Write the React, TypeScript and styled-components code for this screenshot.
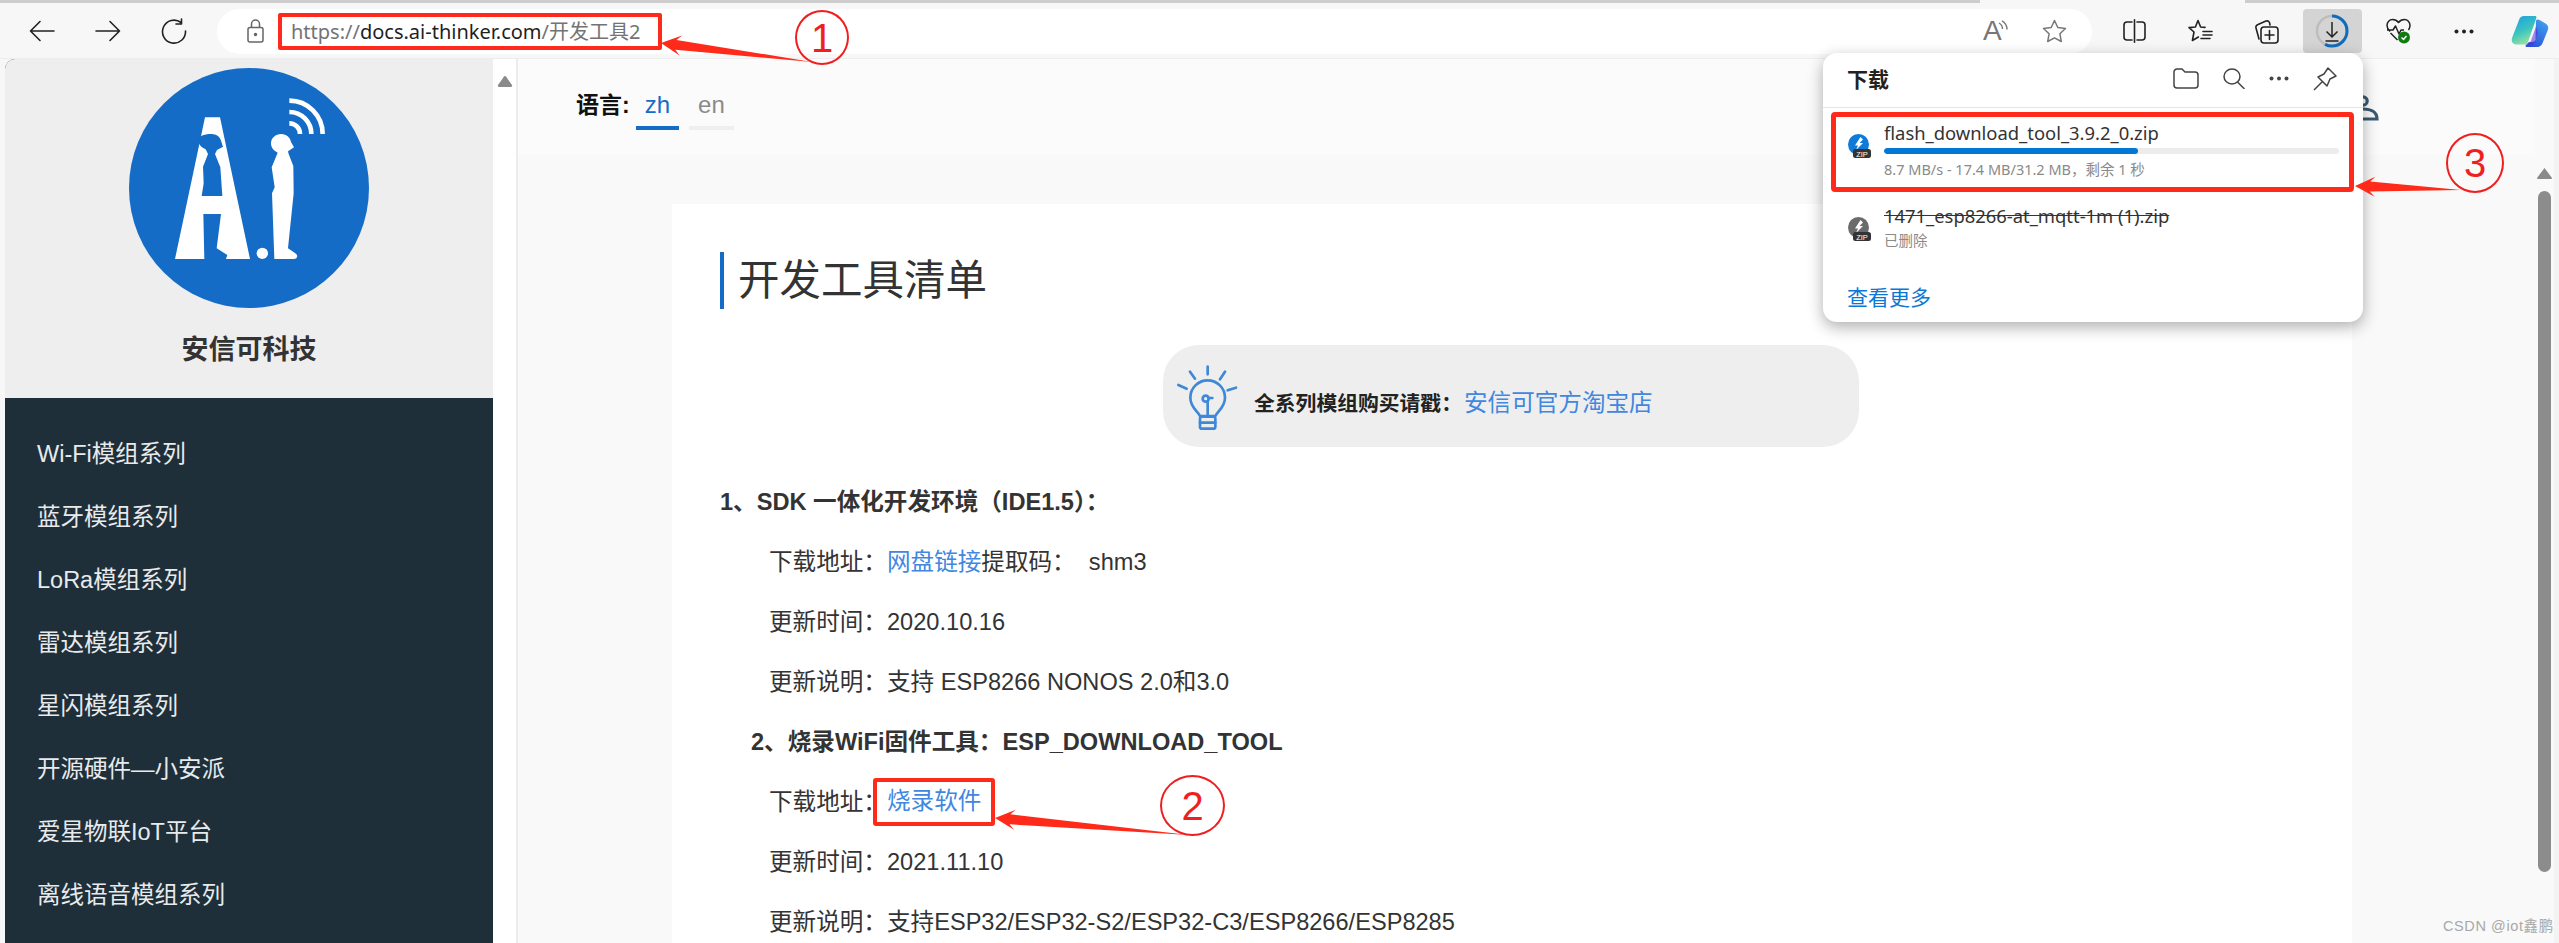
import React from 'react';
import styled, { createGlobalStyle } from 'styled-components';

const UI_FONT = '"Noto Sans", "Noto Sans CJK SC", sans-serif';
const PAGE_FONT = '"Liberation Sans", "Noto Sans CJK SC", sans-serif';
const RED = '#ff2a1a';
const BLUE = '#156cc7';
const LINK = '#4187e0';

const GlobalStyle = createGlobalStyle`
  html, body {
    margin: 0;
    padding: 0;
    background: #f7f7f7;
  }
  * {
    box-sizing: border-box;
  }
`;

const Page = styled.div`
  position: relative;
  width: 2559px;
  height: 943px;
  overflow: hidden;
  background: #f7f7f7;
`;

const TabStrip = styled.div`
  display: flex;
  height: 3px;
  background: #cdcdcd;
`;
const ActiveTabGap = styled.div`
  width: 265px;
  margin-left: 1980px;
  background: #f7f7f7;
`;

const Toolbar = styled.header`
  display: flex;
  align-items: center;
  height: 56px;
  padding: 1px 0 0 9px;
  border-bottom: 1px solid #ededed;
`;
const ToolSlot = styled.div`
  flex: none;
  width: 66px;
  display: flex;
  align-items: center;
  justify-content: center;
`;
const DownloadButton = styled.div`
  width: 59px;
  height: 44px;
  border-radius: 4px;
  background: #d4d4d4;
  display: flex;
  align-items: center;
  justify-content: center;
`;
const AddressBar = styled.div`
  flex: none;
  width: 1875px;
  height: 45px;
  margin: 0 9px 0 10px;
  padding: 0 25px 0 30px;
  border-radius: 23px;
  background: #fff;
  display: flex;
  align-items: center;
`;
const UrlBox = styled.div`
  height: 37px;
  width: 384px;
  margin-left: 14px;
  padding-left: 9px;
  border: 4px solid ${RED};
  border-radius: 2px;
  font: 20px/29px ${UI_FONT};
  color: #737373;
  white-space: nowrap;
`;
const UrlHost = styled.span`
  color: #1f1f1f;
`;
const AddressActions = styled.div`
  margin-left: auto;
  display: flex;
  align-items: center;
  gap: 33px;
`;

const Body = styled.div`
  display: flex;
  height: 884px;
  padding-left: 5px;
`;
const Sidebar = styled.aside`
  flex: none;
  width: 488px;
  border-radius: 10px 0 0 0;
  overflow: hidden;
  background: #1e2f3a;
`;
const SidebarHeader = styled.div`
  height: 339px;
  padding-top: 9px;
  background: #eee;
  display: flex;
  flex-direction: column;
  align-items: center;
`;
const SidebarTitle = styled.div`
  margin-top: 26px;
  font: bold 27px/32px ${PAGE_FONT};
  color: #333;
`;
const SideMenu = styled.ul`
  margin: 0;
  padding: 25px 0 0 32px;
  list-style: none;
`;
const SideMenuItem = styled.li`
  font: 23.5px/63px ${PAGE_FONT};
  color: #e8eaec;
  white-space: nowrap;
`;
const SideScroll = styled.div`
  flex: none;
  width: 23px;
  padding: 14px 0 0 4px;
  background: #fff;
`;

const Main = styled.main`
  flex: 1;
  min-width: 0;
  border-left: 2px solid #ececec;
  background: #f9f9f9;
`;
const LangBar = styled.div`
  height: 96px;
  padding: 25px 156px 0 58px;
  background: #fbfbfb;
  display: flex;
  align-items: flex-start;
`;
const LangLabel = styled.b`
  font: bold 23px/42px ${PAGE_FONT};
  color: #111;
  margin-right: 6px;
`;
const LangTab = styled.div<{ $active?: boolean }>`
  height: 46px;
  padding: 0 9px;
  margin-right: 10px;
  border-bottom: 4px solid ${p => (p.$active ? BLUE : '#efefef')};
  font: 24px/42px ${PAGE_FONT};
  color: ${p => (p.$active ? BLUE : '#8a8a8a')};
`;
const UserIcon = styled.svg`
  margin: 11px 0 0 auto;
  flex: none;
`;

const Card = styled.article`
  width: 1680px;
  height: 739px;
  margin: 49px 0 0 154px;
  padding: 48px 0 0 48px;
  background: #fff;
  overflow: hidden;
`;
const Heading = styled.h1`
  margin: 0;
  height: 57px;
  padding-left: 14px;
  border-left: 4px solid ${BLUE};
  font: 400 41.5px/57px ${PAGE_FONT};
  color: #333;
`;
const TipBox = styled.div`
  width: 696px;
  height: 102px;
  margin: 36px 0 25px 443px;
  padding-left: 7px;
  border-radius: 36px;
  background: #eee;
  display: flex;
  align-items: center;
`;
const TipText = styled.p`
  margin: 14px 0 0 4px;
  font: bold 20.8px/30px ${PAGE_FONT};
  color: #222;
`;
const TipLink = styled.a`
  margin-left: 2px;
  font: 400 23.6px/30px ${PAGE_FONT};
  color: ${LINK};
`;
const Row = styled.div<{ $indent: number; $bold?: boolean }>`
  height: 60px;
  padding-left: ${p => p.$indent}px;
  font: ${p => (p.$bold ? 'bold' : '400')} 23.6px/60px ${PAGE_FONT};
  color: #333;
  white-space: pre;
`;
const RowLink = styled.a`
  color: ${LINK};
`;
const BoxedLink = styled.a`
  display: inline-block;
  vertical-align: middle;
  height: 48px;
  margin: -4px 0 0 -14px;
  padding: 0 10px;
  border: 4px solid ${RED};
  border-radius: 3px;
  font-size: 23.6px;
  line-height: 38px;
  color: ${LINK};
`;

const RightScroll = styled.div`
  flex: none;
  width: 24px;
  padding: 109px 4px 0 3px;
  background: #f9f9f9;
  border-right: 5px solid #f3f3f3;
  display: flex;
  flex-direction: column;
  align-items: center;
`;
const ScrollThumb = styled.div`
  width: 13px;
  height: 681px;
  margin-top: 12px;
  border-radius: 7px;
  background: #8c8c8c;
`;

const Popup = styled.section`
  position: absolute;
  left: 1823px;
  top: 53px;
  width: 540px;
  height: 269px;
  border-radius: 14px;
  background: #fff;
  box-shadow: 0 5px 16px rgba(0, 0, 0, .32);
  font-family: ${UI_FONT};
`;
const PopupHeader = styled.div`
  height: 55px;
  padding: 0 26px 3px 24px;
  border-bottom: 1px solid #e6e6e6;
  display: flex;
  align-items: center;
`;
const PopupTitle = styled.h2`
  margin: 0 auto 0 0;
  font: bold 21px/30px ${UI_FONT};
  color: #222;
`;
const PopupActions = styled.div`
  display: flex;
  align-items: center;
  gap: 24px;
`;
const DownloadItem = styled.div<{ $active?: boolean }>`
  margin: ${p => (p.$active ? '4px 9px 0 8px' : '0 9px 0 8px')};
  height: ${p => (p.$active ? '80px' : '60px')};
  padding: ${p => (p.$active ? '5px 10px 0 12px' : '13px 15px 0 17px')};
  border: ${p => (p.$active ? `5px solid ${RED}` : 'none')};
  border-radius: 4px;
  display: flex;
  gap: 13px;
`;
const ItemIcon = styled.svg`
  flex: none;
  margin-top: 12px;
`;
const ItemBody = styled.div`
  flex: 1;
  min-width: 0;
`;
const FileName = styled.div<{ $deleted?: boolean }>`
  font-size: 18.4px;
  line-height: 22px;
  color: #333;
  white-space: nowrap;
  text-decoration: ${p => (p.$deleted ? 'line-through' : 'none')};
`;
const ProgressTrack = styled.div`
  height: 6px;
  margin-top: 4px;
  border-radius: 3px;
  background: #ececec;
  overflow: hidden;
`;
const ProgressFill = styled.div`
  height: 100%;
  border-radius: 3px;
  background: #0078d4;
`;
const ItemStatus = styled.div<{ $deleted?: boolean }>`
  margin-top: ${p => (p.$deleted ? '2px' : '4px')};
  font-size: 14.5px;
  line-height: 22px;
  color: #8a8a8a;
  white-space: nowrap;
`;
const SeeMore = styled.a`
  display: block;
  margin: 30px 0 0 24px;
  font-size: 21px;
  line-height: 30px;
  color: #0a78d4;
`;

const ArrowLayer = styled.svg`
  position: absolute;
  left: 0;
  top: 0;
  pointer-events: none;
`;
const Callout = styled.div<{ $x: number; $y: number; $w: number; $h: number }>`
  position: absolute;
  left: ${p => p.$x}px;
  top: ${p => p.$y}px;
  width: ${p => p.$w}px;
  height: ${p => p.$h}px;
  border: 2.5px solid #f01f1f;
  border-radius: 50%;
  display: flex;
  align-items: center;
  justify-content: center;
  font: 40px/1 ${PAGE_FONT};
  color: #f01f1f;
`;
const Watermark = styled.div`
  position: absolute;
  left: 2443px;
  top: 917px;
  font: 14.5px/18px ${PAGE_FONT};
  letter-spacing: .6px;
  color: #a8a8a8;
  white-space: nowrap;
`;

const Stroke = { fill: 'none', stroke: '#222', strokeWidth: 1.6, strokeLinecap: 'round', strokeLinejoin: 'round' } as const;

const BackIcon = () => (
  <svg width="26" height="22" viewBox="0 0 26 22" {...Stroke}><path d="M25 11H1.5M11 1.5 1.5 11 11 20.5" /></svg>
);
const ForwardIcon = () => (
  <svg width="26" height="22" viewBox="0 0 26 22" {...Stroke}><path d="M1 11h23.5M15 1.5 24.5 11 15 20.5" /></svg>
);
const RefreshIcon = () => (
  <svg width="26" height="26" viewBox="0 0 26 26" {...Stroke}><path d="M20 4.5A11.5 11.5 0 1 0 24.5 13M20.5 1v5h-5.5" /></svg>
);
const LockIcon = () => (
  <svg width="17" height="24" viewBox="0 0 17 24" fill="none" stroke="#666" strokeWidth="1.5"><rect x="1" y="8.5" width="15" height="14.5" rx="2" /><path d="M4.5 8.5V5a4 4 0 0 1 8 0v3.5" /><circle cx="8.5" cy="15.5" r="1" fill="#666" /></svg>
);
const ReadAloudIcon = () => (
  <svg width="26" height="34" viewBox="0 0 26 34">
    <text x="0" y="26" fontFamily="Liberation Sans" fontSize="28" fontWeight="400" fill="#777">A</text>
    <path d="M16 9c2.500 1.500 3.500 3.500 3.500 6M19 6.800c3.500 2 5 5 5 8.700" fill="none" stroke="#777" strokeWidth="1.400" />
  </svg>
);
const StarIcon = () => (
  <svg width="25" height="24" viewBox="0 0 25 24" fill="none" stroke="#777" strokeWidth="1.500" strokeLinejoin="round"><path d="m12.500 1.500 3.300 7 7.700 1-5.600 5.300 1.400 7.700-6.800-3.700-6.800 3.700 1.400-7.700L1.500 9.500l7.700-1z" /></svg>
);
const SplitIcon = () => (
  <svg width="23" height="24" viewBox="0 0 23 24" {...Stroke}><path d="M9 3H4a3 3 0 0 0-3 3v12a3 3 0 0 0 3 3h5M14 3h5a3 3 0 0 1 3 3v12a3 3 0 0 1-3 3h-5M11.500 .8v22.400" /></svg>
);
const FavoritesIcon = () => (
  <svg width="25" height="24" viewBox="0 0 25 24" {...Stroke}><path d="m10 1.500 2.600 6.500 4.400.4M10 1.500 7.400 8l-6.400.6 5 4.400-1.600 8.500 6-3.500M15 12.500h9M15 16h9M13 19.500h9" /></svg>
);
const CollectionsIcon = () => (
  <svg width="25" height="25" viewBox="0 0 25 25" {...Stroke}><path d="M5 20 2 9a3 3 0 0 1 2-3.500L12 2a3 3 0 0 1 3.500 1.500L16 6" /><rect x="7" y="8" width="17" height="16" rx="3" /><path d="M15.500 11.500v9M11 16h9" /></svg>
);
const DownloadRing = () => (
  <svg width="34" height="34" viewBox="0 0 34 34" fill="none">
    <circle cx="17" cy="17" r="15" stroke="#bdbdbd" strokeWidth="2.500" />
    <circle cx="17" cy="17" r="15" stroke="#0f6cbd" strokeWidth="3" strokeDasharray="54 95" transform="rotate(-90 17 17)" />
    <path d="M17 8v15M11.500 17.500 17 23l5.500-5.500M10.500 27h13" stroke="#222" strokeWidth="1.500" />
  </svg>
);
const HealthIcon = () => (
  <svg width="25" height="26" viewBox="0 0 25 26" fill="none">
    <path d="M4 13.500C2 11.500 1 9.500 1 7.500 1 4 3.500 1.500 6.500 1.500c2.500 0 4.500 1 6 3 1.500-2 3.500-3 6-3 3 0 5.500 2.500 5.500 6 0 1.500-.6 3-1.500 4.500M1 12h6l2.500-4 3.500 8 2-4h3M4.500 15l7 7" stroke="#222" strokeWidth="1.500" strokeLinejoin="round" />
    <circle cx="18" cy="19.500" r="6" fill="#107c10" />
    <path d="m15.500 19.500 2 2 3-3.500" stroke="#fff" strokeWidth="1.400" />
  </svg>
);
const DotsIcon = ({ color = '#222' }: { color?: string }) => (
  <svg width="20" height="5" viewBox="0 0 20 5" fill={color}><circle cx="2.500" cy="2.500" r="2" /><circle cx="10" cy="2.500" r="2" /><circle cx="17.500" cy="2.500" r="2" /></svg>
);
const CopilotIcon = () => (
  <svg width="38" height="33" viewBox="0 0 38 33">
    <defs>
      <linearGradient id="copilotLeft" x1="0" y1="0" x2=".4" y2="1">
        <stop offset="0" stopColor="#1a9ee0" />
        <stop offset=".6" stopColor="#3cc4c0" />
        <stop offset="1" stopColor="#8fe0a0" />
      </linearGradient>
      <linearGradient id="copilotRight" x1=".8" y1="0" x2=".2" y2="1">
        <stop offset="0" stopColor="#3fa0ee" />
        <stop offset="1" stopColor="#2a50d8" />
      </linearGradient>
    </defs>
    <path d="M13 1h11c2 0 1.500 2 1 3l-8 23c-.8 2-2 2.500-4 2.500H6C2 29.500 0 27 1 23L8 5c.8-2.500 2.500-4 5-4z" fill="url(#copilotLeft)" />
    <path d="M25 6c.8-2 2.500-1.500 3.500-1l6 3.500c2.500 1.500 3 3.500 2.500 6L32 27c-1 3-3 5-6.500 5h-9c-2 0-2.500-1-1.500-2l3-3h3c2 0 3-1 3.500-2.500z" fill="url(#copilotRight)" />
    <path d="M16.500 29c2-.5 3-2 3.500-3.500l5-14 2 6-3 9c-.8 2.500-2.500 4.500-5.500 4.500z" fill="#5a2be0" opacity=".55" />
  </svg>
);
const BrandLogo = () => (
  <svg width="240" height="240" viewBox="27 24 720 720">
    <circle cx="387" cy="384" r="360" fill={BLUE} />
    <path d="M255 172h45l90 425h-72l4-12-32-20 13-103h-53l3 135h-88z" fill="#fff" />
    <path d="M275 222c18 0 27 12 30 26l4 12-18 10-6 12 16 40 6 86h-62l6-38-2-50 15-38-7-14c-12-6-22-14-22-28 0-10 14-18 40-18z" fill={BLUE} />
    <circle cx="427" cy="580" r="17" fill="#fff" />
    <path d="M483 222c18 0 28 12 30 24l9 16-18 12 2 8 14 36 1 82-17 165 22 15c10 7 6 17-5 17h-58l-7-197 8-18-9-60 18-44c-8-4-20-12-20-28 0-16 14-28 30-28z" fill="#fff" />
    <path d="M508 190a32 32 0 0 1 32 32M508 156a66 66 0 0 1 66 66M508 122a100 100 0 0 1 100 100" fill="none" stroke="#fff" strokeWidth="14" />
  </svg>
);
const BulbIcon = () => (
  <svg width="80" height="80" viewBox="0 0 240 240" fill="none" stroke="#3f88d8" strokeWidth="8" strokeLinecap="round" strokeLinejoin="round">
    <path d="M113 32v23M60 47l15 21M165 47l-15 23M25 87l25 11M198 95l-25 8" />
    <path d="M90 180c-6-14-29-26-29-55a52 52 0 0 1 104 0c0 29-23 41-29 55z" />
    <circle cx="107" cy="128" r="9" />
    <path d="M113 136v44M115 126h12" />
    <rect x="90" y="182" width="46" height="36" rx="6" />
    <path d="M90 200h46" />
  </svg>
);
const FolderIcon = () => (
  <svg width="26" height="21" viewBox="0 0 26 21" fill="none" stroke="#444" strokeWidth="1.500" strokeLinejoin="round"><path d="M1 4a3 3 0 0 1 3-3h5l3 3h10a3 3 0 0 1 3 3v10a3 3 0 0 1-3 3H4a3 3 0 0 1-3-3z" /></svg>
);
const SearchIcon = () => (
  <svg width="22" height="21" viewBox="0 0 22 21" fill="none" stroke="#444" strokeWidth="1.500" strokeLinecap="round"><ellipse cx="9" cy="8.500" rx="8" ry="7.500" /><path d="m14.500 14 6.500 6.500" /></svg>
);
const PinIcon = () => (
  <svg width="24" height="24" viewBox="0 0 24 24" fill="none" stroke="#444" strokeWidth="1.500" strokeLinejoin="round"><path d="M15 1 23 9l-6 3-3 7-9-9 6-3zM9 15l-8 8" /></svg>
);
const ZipIcon = ({ color }: { color: string }) => (
  <ItemIcon width="23" height="24" viewBox="0 0 23 24">
    <circle cx="10.500" cy="10.500" r="10.500" fill={color} />
    <path d="M12.500 3 7 11.500h3L8 16l7-7h-3.500L15 5.500z" fill="#fff" />
    <rect x="5" y="15" width="18" height="9" rx="2.500" fill="#333" />
    <text x="14" y="22.500" textAnchor="middle" fontFamily="Liberation Sans" fontSize="7.500" fill="#fff">ZIP</text>
  </ItemIcon>
);

// tapered annotation arrow, polygon worked out from its two ends
const arrowPoints = (tailX: number, tailY: number, tipX: number, tipY: number) => {
  const len = Math.hypot(tailX - tipX, tailY - tipY);
  const ux = (tailX - tipX) / len;
  const uy = (tailY - tipY) / len;
  const at = (along: number, side: number) =>
    `${(tipX + ux * along - uy * side).toFixed(1)},${(tipY + uy * along + ux * side).toFixed(1)}`;
  return [at(0, 0), at(20, 10), at(15, 5), `${tailX},${tailY}`, at(15, -5), at(20, -10)].join(' ');
};

const menu = [
  'Wi-Fi模组系列',
  '蓝牙模组系列',
  'LoRa模组系列',
  '雷达模组系列',
  '星闪模组系列',
  '开源硬件—小安派',
  '爱星物联IoT平台',
  '离线语音模组系列',
];

export default function App() {
  return (
    <Page>
      <GlobalStyle />
      <TabStrip><ActiveTabGap /></TabStrip>
      <Toolbar>
        <ToolSlot><BackIcon /></ToolSlot>
        <ToolSlot><ForwardIcon /></ToolSlot>
        <ToolSlot><RefreshIcon /></ToolSlot>
        <AddressBar>
          <LockIcon />
          <UrlBox>https://<UrlHost>docs.ai-thinker.com</UrlHost>/开发工具2</UrlBox>
          <AddressActions>
            <ReadAloudIcon />
            <StarIcon />
          </AddressActions>
        </AddressBar>
        <ToolSlot><SplitIcon /></ToolSlot>
        <ToolSlot><FavoritesIcon /></ToolSlot>
        <ToolSlot><CollectionsIcon /></ToolSlot>
        <ToolSlot><DownloadButton><DownloadRing /></DownloadButton></ToolSlot>
        <ToolSlot><HealthIcon /></ToolSlot>
        <ToolSlot><DotsIcon /></ToolSlot>
        <ToolSlot><CopilotIcon /></ToolSlot>
      </Toolbar>

      <Body>
        <Sidebar>
          <SidebarHeader>
            <BrandLogo />
            <SidebarTitle>安信可科技</SidebarTitle>
          </SidebarHeader>
          <SideMenu>
            {menu.map(item => <SideMenuItem key={item}>{item}</SideMenuItem>)}
          </SideMenu>
        </Sidebar>
        <SideScroll>
          <svg width="16" height="11" viewBox="0 0 16 11" fill="#8a8a8a"><path d="M8 0c1 0 1.500 1 2 2l5 7c.5 1 0 2-1 2H2C1 11 .5 10 1 9l5-7c.5-1 1-2 2-2z" /></svg>
        </SideScroll>

        <Main>
          <LangBar>
            <LangLabel>语言:</LangLabel>
            <LangTab $active>zh</LangTab>
            <LangTab>en</LangTab>
            <UserIcon width="32" height="26" viewBox="0 0 32 26" fill="none" stroke="#3c5a72" strokeWidth="3.200">
              <circle cx="16" cy="6" r="4.200" />
              <path d="M2 24c0-7 6-10 14-10s14 3 14 10z" />
            </UserIcon>
          </LangBar>
          <Card>
            <Heading>开发工具清单</Heading>
            <TipBox>
              <BulbIcon />
              <TipText>全系列模组购买请戳&#xFF1A;<TipLink>安信可官方淘宝店</TipLink></TipText>
            </TipBox>
            <Row $indent={0} $bold>1、SDK 一体化开发环境&#xFF08;IDE1.5&#xFF09;&#xFF1A;</Row>
            <Row $indent={49}>下载地址&#xFF1A;<RowLink>网盘链接</RowLink>提取码&#xFF1A;{'  '}shm3</Row>
            <Row $indent={49}>更新时间&#xFF1A;2020.10.16</Row>
            <Row $indent={49}>更新说明&#xFF1A;支持 ESP8266 NONOS 2.0和3.0</Row>
            <Row $indent={31} $bold>2、烧录WiFi固件工具&#xFF1A;ESP_DOWNLOAD_TOOL</Row>
            <Row $indent={49}>下载地址&#xFF1A;<BoxedLink>烧录软件</BoxedLink></Row>
            <Row $indent={49}>更新时间&#xFF1A;2021.11.10</Row>
            <Row $indent={49}>更新说明&#xFF1A;支持ESP32/ESP32-S2/ESP32-C3/ESP8266/ESP8285</Row>
          </Card>
        </Main>

        <RightScroll>
          <svg width="15" height="11" viewBox="0 0 15 11" fill="#8a8a8a"><path d="M7.500 0 15 10c0 1-1 1-1 1H1s-1 0-1-1z" /></svg>
          <ScrollThumb />
        </RightScroll>
      </Body>

      <Popup>
        <PopupHeader>
          <PopupTitle>下载</PopupTitle>
          <PopupActions>
            <FolderIcon />
            <SearchIcon />
            <DotsIcon color="#444" />
            <PinIcon />
          </PopupActions>
        </PopupHeader>
        <DownloadItem $active>
          <ZipIcon color="#0f7ad8" />
          <ItemBody>
            <FileName>flash_download_tool_3.9.2_0.zip</FileName>
            <ProgressTrack><ProgressFill style={{ width: `${(17.4 / 31.2) * 100}%` }} /></ProgressTrack>
            <ItemStatus>8.7 MB/s - 17.4 MB/31.2 MB&#xFF0C;剩余 1 秒</ItemStatus>
          </ItemBody>
        </DownloadItem>
        <DownloadItem>
          <ZipIcon color="#6b6b6b" />
          <ItemBody>
            <FileName $deleted>1471_esp8266-at_mqtt-1m (1).zip</FileName>
            <ItemStatus $deleted>已删除</ItemStatus>
          </ItemBody>
        </DownloadItem>
        <SeeMore>查看更多</SeeMore>
      </Popup>

      <ArrowLayer width="2559" height="943" fill={RED}>
        <polygon points={arrowPoints(812, 62, 661, 43)} />
        <polygon points={arrowPoints(1189, 835, 995, 818)} />
        <polygon points={arrowPoints(2461, 190, 2355, 186)} />
      </ArrowLayer>
      <Callout $x={795} $y={10} $w={54} $h={55}>1</Callout>
      <Callout $x={1160} $y={775} $w={65} $h={61}>2</Callout>
      <Callout $x={2446} $y={133} $w={58} $h={60}>3</Callout>
      <Watermark>CSDN @iot鑫鹏</Watermark>
    </Page>
  );
}
